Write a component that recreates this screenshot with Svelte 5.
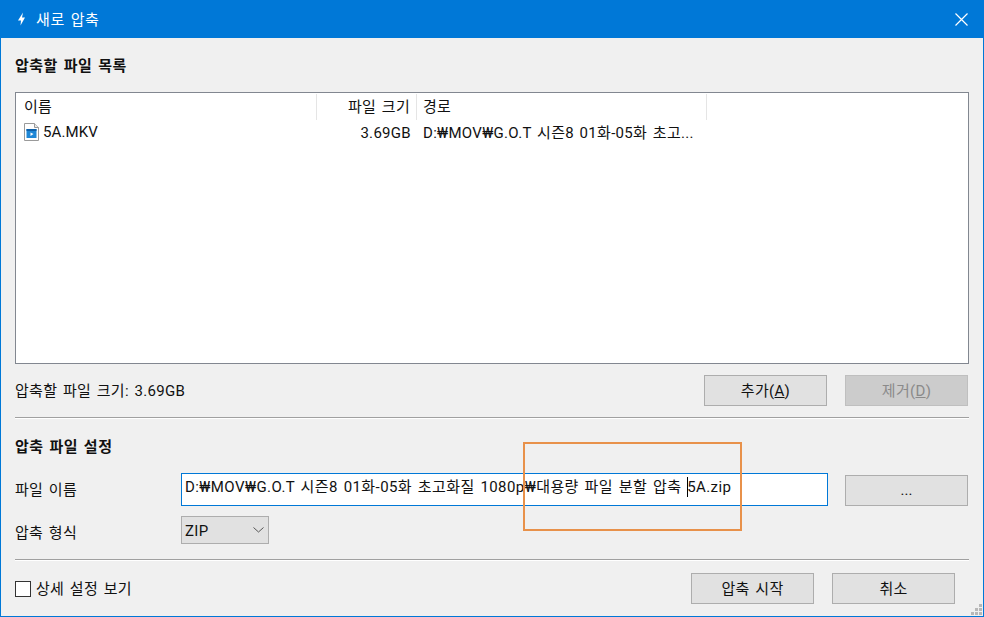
<script>
	const gripDots = [[2, 0], [1, 1], [2, 1], [0, 2], [1, 2], [2, 2]];
</script>

<div class="window">
	<header class="titlebar">
		<svg class="app-icon" width="16" height="16" viewBox="0 0 16 16">
			<path d="M10 1.5 L5 9.5 H8 L7.5 14.5 L12 6.5 H9 Z" fill="#fff" />
		</svg>
		<span class="title">새로 압축</span>
		<svg class="close" width="13" height="13" viewBox="0 0 13 13">
			<path d="M.5.5 L12.5 12.5 M12.5.5 L.5 12.5" stroke="#fff" stroke-width="1.2" fill="none" />
		</svg>
	</header>

	<main class="body">
		<h2 class="heading first">압축할 파일 목록</h2>

		<section class="list">
			<div class="list-row list-head">
				<span class="col name">이름</span>
				<span class="col size">파일 크기</span>
				<span class="col path">경로</span>
			</div>
			<div class="list-row item">
				<span class="col name">
					<svg width="15" height="18" viewBox="0 0 15 18">
						<path d="M.5.5 H10.5 L14.5 4.5 V17.5 H.5 Z" fill="#fff" stroke="#9a9a9a" />
						<path d="M10.5.5 V4.5 H14.5" fill="#e8e8e8" stroke="#9a9a9a" />
						<rect x="2.5" y="6" width="10" height="9" fill="#1e87d6" />
						<rect x="2.5" y="6" width="10" height="2" fill="#0d5fa8" />
						<path d="M6.5 9.5 L9.5 11 L6.5 13 Z" fill="#fff" />
					</svg>
					5A.MKV
				</span>
				<span class="col size">3.69GB</span>
				<span class="col path">D:₩MOV₩G.O.T 시즌8 01화-05화 초고...</span>
			</div>
		</section>

		<div class="list-footer">
			<span>압축할 파일 크기: 3.69GB</span>
			<div class="buttons">
				<button class="btn"><span>추가(<u>A</u>)</span></button>
				<button class="btn" disabled><span>제거(<u>D</u>)</span></button>
			</div>
		</div>

		<div class="divider"></div>

		<h2 class="heading">압축 파일 설정</h2>

		<div class="settings">
			<label for="target">파일 이름</label>
			<div class="target" id="target">D:₩MOV₩G.O.T 시즌8 01화-05화 초고화질 1080p₩대용량 파일 분할 압축 <i class="caret"></i>5A.zip</div>
			<button class="btn browse">...</button>

			<span class="format-label">압축 형식</span>
			<div class="combo">
				<span class="combo-value">ZIP</span>
				<svg width="11" height="6" viewBox="0 0 11 6">
					<path d="M.5.5 L5.5 5 L10.5.5" stroke="#555" fill="none" />
				</svg>
			</div>
		</div>

		<div class="divider lower"></div>

		<footer class="actions">
			<div class="check"><i class="box"></i>상세 설정 보기</div>
			<div class="buttons end">
				<button class="btn">압축 시작</button>
				<button class="btn">취소</button>
			</div>
		</footer>
	</main>

	<div class="highlight"></div>

	<div class="grip">
		{#each gripDots as [x, y]}
			<i style="grid-area: {y + 1} / {x + 1}"></i>
		{/each}
	</div>
</div>

<style>
	:global(body) {
		margin: 0;
		overflow: hidden;
	}

	.window {
		position: relative;
		box-sizing: border-box;
		width: 984px;
		height: 617px;
		display: flex;
		flex-direction: column;
		background: #f0f0f0;
		border: 1px solid #0078d7;
		border-top: 0;
		font-family: Roboto, "Noto Sans CJK KR", sans-serif;
		font-size: 15px;
		letter-spacing: 0.3px;
		word-spacing: 1.6px;
		color: #111;
	}

	.titlebar {
		height: 38px;
		flex: none;
		display: flex;
		align-items: center;
		background: #0078d7;
		color: #fff;
		padding: 0 15px 0 12px;
	}

	.title {
		margin: 0 0 1px 7px;
		letter-spacing: 0.6px;
	}

	.close {
		margin-left: auto;
	}

	.body {
		flex: 1;
		display: flex;
		flex-direction: column;
		padding: 0 14px;
	}

	.heading {
		margin: 0;
		font-size: 15px;
		font-weight: 700;
		line-height: 20px;
		letter-spacing: 0.5px;
	}

	.heading.first {
		margin-top: 18px;
	}

	.list {
		box-sizing: border-box;
		height: 272px;
		margin-top: 16px;
		background: #fff;
		border: 1px solid #828790;
	}

	.list-row {
		display: flex;
		line-height: 20px;
	}

	.list-head {
		height: 26px;
		align-items: center;
		padding-top: 2px;
		box-sizing: border-box;
	}

	.item {
		height: 26px;
		align-items: center;
	}

	.col {
		box-sizing: border-box;
		height: 26px;
		line-height: 27px;
		white-space: nowrap;
	}

	.item .col {
		line-height: 29px;
	}

	.item .name {
		letter-spacing: 0.1px;
	}

	.item .name svg {
		margin-top: -1px;
	}

	.name {
		width: 301px;
		padding-left: 8px;
		display: flex;
		align-items: center;
		gap: 4px;
	}

	.size {
		width: 100px;
		padding-right: 6px;
		text-align: right;
	}

	.path {
		width: 290px;
		padding-left: 6px;
	}

	.list-head .col {
		border-right: 1px solid #e5e5e5;
	}

	.list-footer {
		height: 31px;
		margin-top: 11px;
		display: flex;
		align-items: center;
		justify-content: space-between;
	}

	.list-footer > span {
		margin-bottom: 2px;
	}

	.buttons {
		display: flex;
		gap: 18px;
		margin-right: 1px;
	}

	.buttons.end {
		margin-right: 14px;
	}

	.btn {
		box-sizing: border-box;
		width: 123px;
		height: 31px;
		padding: 0 0 3px;
		background: #e1e1e1;
		border: 1px solid #adadad;
		border-radius: 0;
		color: #111;
		font: inherit;
		letter-spacing: inherit;
		word-spacing: inherit;
	}

	.btn:disabled {
		background: #cccccc;
		border-color: #bfbfbf;
		color: #8a8a8a;
	}

	.browse {
		margin-top: 1px;
		padding: 0;
		letter-spacing: 0;
	}

	.divider {
		height: 1px;
		flex: none;
		margin-top: 11px;
		background: #a0a0a0;
		border-bottom: 1px solid #fff;
	}

	.divider ~ .heading {
		margin-top: 18px;
	}

	.settings {
		display: grid;
		grid-template-columns: 149px 647px 123px;
		column-gap: 17px;
		row-gap: 10px;
		grid-template-rows: 33px 28px;
		align-items: center;
		margin-top: 16px;
	}

	.settings label {
		margin-bottom: 2px;
	}

	.format-label {
		margin-top: 2px;
	}

	.target {
		box-sizing: border-box;
		height: 33px;
		padding-left: 3px;
		line-height: 27px;
		letter-spacing: 0.42px;
		background: #fff;
		border: 1px solid #0078d7;
		white-space: nowrap;
		overflow: hidden;
	}

	.caret {
		display: inline-block;
		width: 1px;
		height: 20px;
		margin-right: -1px;
		vertical-align: -5px;
		background: #000;
	}

	.combo {
		box-sizing: border-box;
		width: 88px;
		height: 28px;
		display: flex;
		align-items: center;
		justify-content: space-between;
		padding: 0 4px 0 3px;
		background: #e1e1e1;
		border: 1px solid #adadad;
	}

	.combo-value {
		margin-top: 2px;
	}

	.lower {
		margin-top: 15px;
	}

	.actions {
		display: flex;
		align-items: center;
		justify-content: space-between;
		height: 31px;
		margin-top: 12px;
	}

	.check {
		display: flex;
		align-items: center;
		gap: 5px;
		line-height: 16px;
	}

	.box {
		box-sizing: border-box;
		width: 16px;
		height: 16px;
		background: #fff;
		border: 1px solid #333;
	}

	.highlight {
		position: absolute;
		left: 522px;
		top: 442px;
		box-sizing: border-box;
		width: 219px;
		height: 89px;
		border: 2px solid #e8914a;
	}

	.grip {
		position: absolute;
		right: 1px;
		bottom: 1px;
		display: grid;
		grid-template-columns: repeat(3, 3px);
		grid-auto-rows: 3px;
		gap: 1px;
	}

	.grip i {
		background: #b8b8b8;
	}
</style>
